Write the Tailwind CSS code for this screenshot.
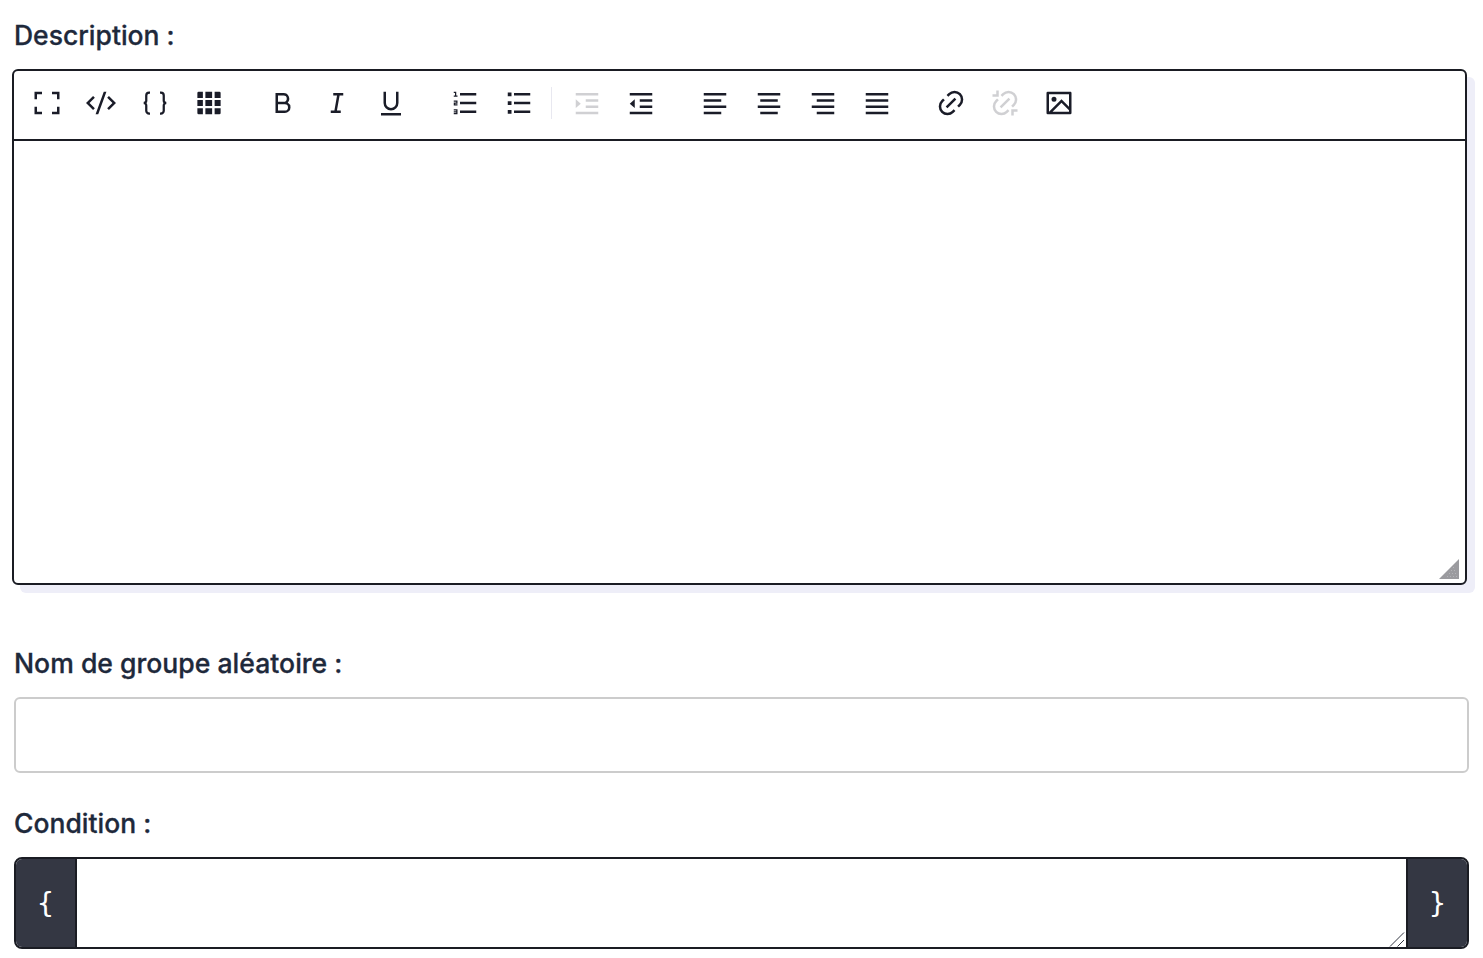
<!DOCTYPE html>
<html lang="fr">
<head>
<meta charset="utf-8">
<title>Formulaire</title>
<script src="https://cdn.jsdelivr.net/npm/@tailwindcss/browser@4"></script>
</head>
<body class="bg-white overflow-hidden font-['Inter','Noto_Sans',sans-serif] text-[#1e293b]">
<main class="w-[1483px] h-[958px] pl-[14px] pt-[16px]">
  <label class="block h-[38px] leading-[38px] text-[26.5px] font-medium [-webkit-text-stroke:0.3px_#1e293b] mb-[15px]">Description :</label>

  <section class="relative -ml-[2px] w-[1455px] h-[516px] border-2 border-[#1a1c23] rounded-[6px] bg-white shadow-[8px_8px_0_0_#eeeef8] flex flex-col">
    <div class="h-[70px] shrink-0 border-b-2 border-[#1a1c23] flex items-center pl-[6px] pb-[4px] text-[#1a1c28]">
      <div class="flex mr-[20px]">
        <button class="w-[54px] h-[54px] flex items-center justify-center"><svg class="w-[30px] h-[30px]" viewBox="0 0 24 24" fill="currentColor"><path d="M20 3h2v6h-2V5h-4V3h4zM4 3h4v2H4v4H2V3h2zm16 16v-4h2v6h-6v-2h4zM4 19h4v2H2v-6h2v4z"/></svg></button>
        <button class="w-[54px] h-[54px] flex items-center justify-center"><svg class="w-[30px] h-[30px]" viewBox="0 0 24 24" fill="currentColor"><path d="M24 12l-5.657 5.657-1.414-1.414L21.172 12l-4.243-4.243 1.414-1.414L24 12zM2.828 12l4.243 4.243-1.414 1.414L0 12l5.657-5.657L7.07 7.757 2.828 12zm6.96 9H7.66l6.552-18h2.128L9.788 21z"/></svg></button>
        <button class="w-[54px] h-[54px] flex items-center justify-center"><svg class="w-[30px] h-[30px]" viewBox="0 0 24 24" fill="none" stroke="currentColor" stroke-width="1.8"><path d="M8 3.600H7.300A2.300 2.300 0 0 0 5 5.900v4.200A1.900 1.900 0 0 1 3 12a1.900 1.900 0 0 1 2 1.900v4.200a2.300 2.300 0 0 0 2.300 2.300H8M16 3.600h.7A2.300 2.300 0 0 1 19 5.900v4.200a1.900 1.900 0 0 0 2 1.900 1.900 1.900 0 0 0-2 1.900v4.200a2.300 2.300 0 0 1-2.300 2.300H16"/></svg></button>
        <button class="w-[54px] h-[54px] flex items-center justify-center"><svg class="w-[30px] h-[30px]" viewBox="0 0 24 24" fill="currentColor"><path d="M3.700 3h3.400v4.900H2.700V4a1 1 0 0 1 1-1zM9.100 3h5.400v4.900H9.100zM16.500 3h3.800a1 1 0 0 1 1 1v3.900h-4.800zM2.700 9.600h4.400v4.800H2.700zM9.100 9.600h5.400v4.800H9.100zM16.500 9.600h4.800v4.800h-4.800zM2.700 16.100h4.400V21H3.700a1 1 0 0 1-1-1zM9.100 16.100h5.400V21H9.100zM16.500 16.100h4.800V20a1 1 0 0 1-1 1h-3.800z"/></svg></button>
      </div>
      <div class="flex mr-[20px]">
        <button class="w-[54px] h-[54px] flex items-center justify-center"><svg class="w-[30px] h-[30px]" viewBox="0 0 24 24" fill="currentColor"><path d="M8 11h4.500a2.500 2.500 0 1 0 0-5H8v5zm10 4.500a4.500 4.500 0 0 1-4.500 4.500H6V4h6.500a4.500 4.500 0 0 1 3.256 7.606A4.498 4.498 0 0 1 18 15.500zM8 13v5h5.500a2.500 2.500 0 1 0 0-5H8z"/></svg></button>
        <button class="w-[54px] h-[54px] flex items-center justify-center"><svg class="w-[30px] h-[30px]" viewBox="0 0 24 24" fill="currentColor"><path d="M15 20H7v-2h2.927l2.116-12H9V4h8v2h-2.927l-2.116 12H15z"/></svg></button>
        <button class="w-[54px] h-[54px] flex items-center justify-center"><svg class="w-[30px] h-[30px]" viewBox="0 0 24 24" fill="currentColor"><path d="M8 3v9a4 4 0 1 0 8 0V3h2v9a6 6 0 1 1-12 0V3h2zM4 20h16v2H4v-2z"/></svg></button>
      </div>
      <div class="flex">
        <button class="w-[54px] h-[54px] flex items-center justify-center"><svg class="w-[30px] h-[30px]" viewBox="0 0 24 24" fill="currentColor"><path d="M8 4h13v2H8V4zM5 3v3h1v1H3V6h1V4H3V3h2zM3 14v-2.500h2V11H3v-1h3v2.500H4v.5h2v1H3zm2 5.500H3v-1h2V18H3v-1h3v4H3v-1h2v-.5zM8 11h13v2H8v-2zm0 7h13v2H8v-2z"/></svg></button>
        <button class="w-[54px] h-[54px] flex items-center justify-center"><svg class="w-[30px] h-[30px]" viewBox="0 0 24 24" fill="currentColor"><path d="M8 4h13v2H8V4zM3 3.500h3v3H3zM3 10.500h3v3H3zM3 17.500h3v3H3zM8 11h13v2H8v-2zm0 7h13v2H8v-2z"/></svg></button>
      </div>
      <div class="w-[1px] h-[32px] bg-[#e8e8f0] ml-[5px] mr-[8px]"></div>
      <div class="flex mr-[20px]">
        <button class="w-[54px] h-[54px] flex items-center justify-center opacity-20"><svg class="w-[30px] h-[30px]" viewBox="0 0 24 24" fill="currentColor"><path d="M3 4h18v2H3V4zm0 15h18v2H3v-2zm8-5h10v2H11v-2zm0-5h10v2H11V9zm-4 3.500L3 16V9l4 3.500z"/></svg></button>
        <button class="w-[54px] h-[54px] flex items-center justify-center"><svg class="w-[30px] h-[30px]" viewBox="0 0 24 24" fill="currentColor"><path d="M3 4h18v2H3V4zm0 15h18v2H3v-2zm8-5h10v2H11v-2zm0-5h10v2H11V9zm-8 3.500L7 9v7l-4-3.500z"/></svg></button>
      </div>
      <div class="flex mr-[20px]">
        <button class="w-[54px] h-[54px] flex items-center justify-center"><svg class="w-[30px] h-[30px]" viewBox="0 0 24 24" fill="currentColor"><path d="M3 4h18v2H3V4zm0 15h14v2H3v-2zm0-5h18v2H3v-2zm0-5h14v2H3V9z"/></svg></button>
        <button class="w-[54px] h-[54px] flex items-center justify-center"><svg class="w-[30px] h-[30px]" viewBox="0 0 24 24" fill="currentColor"><path d="M3 4h18v2H3V4zm2 15h14v2H5v-2zm-2-5h18v2H3v-2zm2-5h14v2H5V9z"/></svg></button>
        <button class="w-[54px] h-[54px] flex items-center justify-center"><svg class="w-[30px] h-[30px]" viewBox="0 0 24 24" fill="currentColor"><path d="M3 4h18v2H3V4zm4 15h14v2H7v-2zm-4-5h18v2H3v-2zm4-5h14v2H7V9z"/></svg></button>
        <button class="w-[54px] h-[54px] flex items-center justify-center"><svg class="w-[30px] h-[30px]" viewBox="0 0 24 24" fill="currentColor"><path d="M3 4h18v2H3V4zm0 15h18v2H3v-2zm0-5h18v2H3v-2zm0-5h18v2H3V9z"/></svg></button>
      </div>
      <div class="flex">
        <button class="w-[54px] h-[54px] flex items-center justify-center"><svg class="w-[30px] h-[30px]" viewBox="0 0 24 24" fill="currentColor"><path d="M18.364 15.536L16.95 14.12l1.414-1.414a5 5 0 1 0-7.071-7.071L9.879 7.05 8.464 5.636 9.88 4.222a7 7 0 0 1 9.9 9.9l-1.415 1.414zm-2.828 2.828l-1.415 1.414a7 7 0 0 1-9.9-9.9l1.415-1.414L7.05 9.88l-1.414 1.414a5 5 0 0 0 7.071 7.071l1.414-1.414 1.415 1.414zm-.708-10.607l1.415 1.415-7.071 7.07-1.415-1.414 7.071-7.07z"/></svg></button>
        <button class="w-[54px] h-[54px] flex items-center justify-center opacity-20"><svg class="w-[30px] h-[30px]" viewBox="0 0 24 24" fill="currentColor"><path d="M17 17h5v2h-3v3h-2v-5zM7 7H2V5h3V2h2v5zm11.364 8.536L16.95 14.12l1.414-1.414a5 5 0 1 0-7.071-7.071L9.879 7.05 8.464 5.636 9.88 4.222a7 7 0 0 1 9.9 9.9l-1.415 1.414zm-2.828 2.828l-1.415 1.414a7 7 0 0 1-9.9-9.9l1.415-1.414L7.05 9.88l-1.414 1.414a5 5 0 0 0 7.071 7.071l1.414-1.414 1.415 1.414zm-.708-10.607l1.415 1.415-7.071 7.07-1.415-1.414 7.071-7.07z"/></svg></button>
        <button class="w-[54px] h-[54px] flex items-center justify-center"><svg class="w-[30px] h-[30px]" viewBox="0 0 24 24" fill="currentColor"><path d="M4.828 21l-.02.02-.021-.020H2.992A.993.993 0 0 1 2 20.007V3.993A1 1 0 0 1 2.992 3h18.016c.548 0 .992.445.992.993v16.014a1 1 0 0 1-.992.993H4.828zM20 15V5H4v14L14 9l6 6zm0 2.828l-6-6L6.828 19H20v-1.172zM8 11a2 2 0 1 1 0-4 2 2 0 0 1 0 4z"/></svg></button>
      </div>
    </div>
    <div class="flex-1"></div>
    <svg class="absolute right-[6px] bottom-[4px] w-[20px] h-[20px]" viewBox="0 0 20 20"><path d="M20 0V20H0z" fill="#9b9b9f"/><g fill="#b4b4b8"><rect x="14" y="8" width="1" height="1"/><rect x="12" y="11" width="1" height="1"/><rect x="15" y="11" width="1" height="1"/><rect x="10" y="14" width="1" height="1"/><rect x="13" y="14" width="1" height="1"/><rect x="16" y="14" width="1" height="1"/><rect x="8" y="17" width="1" height="1"/><rect x="11" y="17" width="1" height="1"/><rect x="14" y="17" width="1" height="1"/><rect x="17" y="17" width="1" height="1"/></g></svg>
  </section>

  <label class="block h-[38px] leading-[38px] text-[26.6px] font-medium [-webkit-text-stroke:0.3px_#1e293b] mt-[59px] mb-[15px]">Nom de groupe aléatoire :</label>
  <input type="text" class="block w-[1455px] h-[76px] border-2 border-[#cccccc] rounded-[6px] bg-white">

  <label class="block h-[38px] leading-[38px] text-[26.5px] font-medium [-webkit-text-stroke:0.3px_#1e293b] mt-[31px] mb-[15px]">Condition :</label>
  <div class="flex w-[1455px] h-[92px] border-2 border-[#1a1c23] rounded-[8px] overflow-hidden">
    <div class="w-[61px] shrink-0 bg-[#343743] text-white text-[28px] pt-[2px] flex items-center justify-center font-['DejaVu_Sans_Mono',monospace] border-r-2 border-[#1a1c23]">{</div>
    <div class="relative flex-1 min-w-0 h-full">
      <textarea class="w-full h-full bg-white block outline-none resize-none"></textarea>
      <svg class="absolute right-[1px] bottom-0 w-[16px] h-[16px] text-[#333742]" viewBox="0 0 16 16" fill="none" stroke="currentColor" stroke-width="1"><path d="M1 15.500 15 1.500M8.500 15.500 15 9"/></svg>
    </div>
    <div class="w-[61px] shrink-0 bg-[#343743] text-white text-[28px] pt-[2px] flex items-center justify-center font-['DejaVu_Sans_Mono',monospace] border-l-2 border-[#1a1c23]">}</div>
  </div>
</main>
</body>
</html>
